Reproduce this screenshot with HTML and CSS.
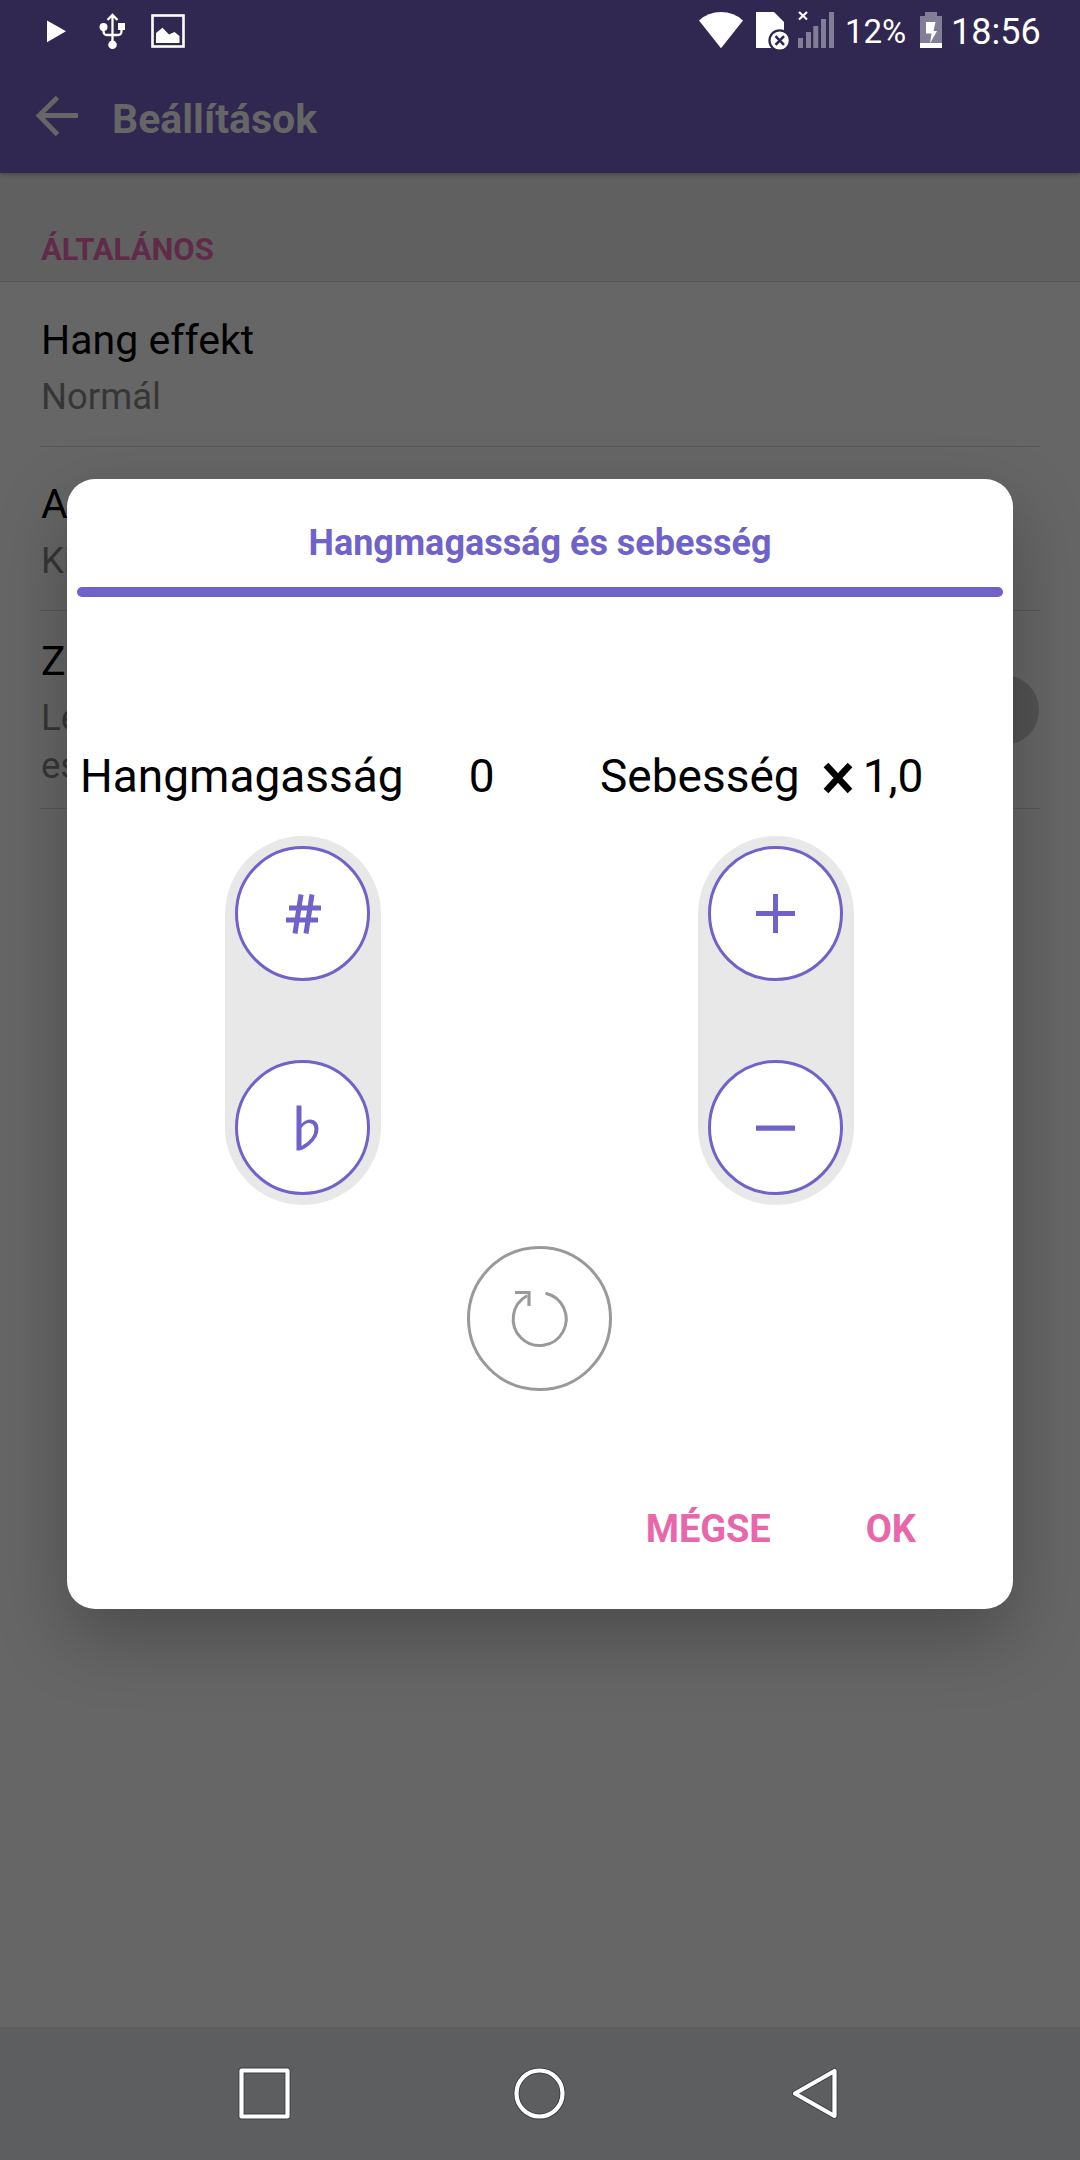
FILE: index.html
```html
<!DOCTYPE html>
<html lang="hu">
<head>
    <meta charset="UTF-8">
    <meta name="viewport" content="width=device-width, initial-scale=1.0">
    <title>Beállítások</title>
    <link rel="stylesheet" href="styles.css">
</head>
<body>
    <div class="screen">
        <header class="header">
            <div class="status-bar">
                <svg class="play-icon" width="20" height="64" viewBox="47 0 20 64"><path d="M47 20.500L66 31.200L47 42.200Z" fill="#fff"/></svg>
                <svg class="usb-icon" width="28" height="64" viewBox="98 0 28 64">
                    <path d="M112.500 15V42M107.500 20L112.500 15L117.500 20M103.500 28V31Q103.500 35 107 35H118Q121.500 35 121.500 31V28" fill="none" stroke="#fff" stroke-width="2.300"/>
                    <circle cx="103.500" cy="27" r="4" fill="#fff"/>
                    <circle cx="112.500" cy="44.700" r="4.300" fill="#fff"/>
                    <rect x="118" y="23" width="7" height="7" fill="#fff"/>
                </svg>
                <svg class="image-icon" width="34" height="64" viewBox="151 0 34 64">
                    <rect x="152.500" y="15.500" width="31" height="31" fill="none" stroke="#fff" stroke-width="2.600"/>
                    <path d="M156 33L162.500 27.700L169 34.500L174.500 32L179.500 36V43H156Z" fill="#fff"/>
                </svg>
                <svg class="wifi-icon" width="44" height="64" viewBox="699 0 44 64"><path d="M699 20.500Q708 12 721 12T743 20.500L721 48.300Z" fill="#fff"/></svg>
                <svg class="sim-icon" width="34" height="64" viewBox="756 0 34 64">
                    <path d="M756 12H774L784 22V48H756Z" fill="#fff"/>
                    <circle cx="779.700" cy="40.500" r="10.200" fill="#fff" stroke="#302851" stroke-width="2.300"/>
                    <path d="M775.500 36.200L784 44.800M784 36.200L775.500 44.800" stroke="#302851" stroke-width="2.600"/>
                </svg>
                <svg class="signal-icon" width="37" height="64" viewBox="798 0 37 64">
                    <path d="M798 38h5v10h-5zM806 32h5v16h-5zM813.300 26h5v22h-5zM821 19h5v29h-5zM829 12h5v36h-5z" fill="#837e97"/>
                    <path d="M799 12L807 19.500M807 12L799 19.500" stroke="#fff" stroke-width="2.200"/>
                </svg>
                <span class="percent">12%</span>
                <svg class="battery-icon" width="22" height="64" viewBox="920 0 22 64">
                    <path d="M925 12h12v4h5v27h-22V16h5z" fill="#837e97"/>
                    <path d="M920 43h22v5h-22zM926 22h9.500l-2 9h3.500l-7 12.500l1.500-10h-5.500z" fill="#fff"/>
                </svg>
                <span class="clock">18:56</span>
            </div>
            <div class="toolbar">
                <svg class="back-icon" width="44" height="44" viewBox="35 94 44 44"><path d="M78 115.500H39M57.500 97.500L39 115.500L57.500 134.500" fill="none" stroke="#666" stroke-width="4.800"/></svg>
                <h1>Beállítások</h1>
            </div>
        </header>

        <h2 class="section-title">ÁLTALÁNOS</h2>
        <ul class="settings">
            <li class="setting">
                <div class="name">Hang effekt</div>
                <div class="value">Normál</div>
            </li>
            <li class="setting">
                <div class="name">A</div>
                <div class="value">Ki</div>
            </li>
            <li class="setting setting-switch">
                <div>
                    <div class="name">Z</div>
                    <div class="value">Le<br>es</div>
                </div>
                <span class="knob"></span>
            </li>
        </ul>

        <nav class="nav-bar">
            <svg width="1080" height="133" viewBox="0 2027 1080 133">
                <g fill="none" stroke="#3c3d3f" stroke-width="6" stroke-linejoin="round">
                    <rect x="241.500" y="2070.500" width="46" height="46"/>
                    <circle cx="539.500" cy="2093.500" r="23"/>
                    <path d="M834.500 2071V2116L795 2093.500Z"/>
                </g>
                <g fill="none" stroke="#fff" stroke-width="4.200" stroke-linejoin="round">
                    <rect x="241.500" y="2070.500" width="46" height="46"/>
                    <circle cx="539.500" cy="2093.500" r="23"/>
                    <path d="M834.500 2071V2116L795 2093.500Z"/>
                </g>
            </svg>
        </nav>

        <div class="dialog">
            <h3>Hangmagasság és sebesség</h3>
            <div class="bar"></div>
            <div class="columns">
                <div class="column">
                    <div class="label-row">
                        <span class="label">Hangmagasság</span>
                        <span class="pitch">0</span>
                    </div>
                    <div class="pill">
                        <button class="round">
                            <svg width="60" height="60" viewBox="0 0 60 60"><path d="M28 10.500L22 49.500M39 10.500L33 49.500M16 24H48M13 36H45" fill="none" stroke="#6f63ca" stroke-width="5"/></svg>
                        </button>
                        <button class="round">
                            <svg width="60" height="60" viewBox="0 0 60 60"><path fill-rule="evenodd" d="M23.500 7.500h5V26Q32 21.500 37.500 21.500Q45.500 22 45.500 31Q45.500 39 37 46.500Q31.500 51.500 26.500 52.500H23.500ZM28.500 30V48Q41.500 41 41.500 31Q41 25 36 25Q32 25 28.500 30Z" fill="#6f63ca"/></svg>
                        </button>
                    </div>
                </div>
                <div class="column">
                    <div class="label-row">
                        <span class="label">Sebesség</span>
                        <svg class="times" width="30" height="32" viewBox="0 0 30 32"><path d="M3 3L27 29M27 3L3 29" stroke="#000" stroke-width="6.500"/></svg>
                        <span>1,0</span>
                    </div>
                    <div class="pill">
                        <button class="round">
                            <svg width="61" height="61" viewBox="0 0 61 61"><path d="M28 11h5v17h17v5H33v17h-5V33H11v-5h17z" fill="#6f63ca"/></svg>
                        </button>
                        <button class="round">
                            <svg width="61" height="61" viewBox="0 0 61 61"><path d="M11 28.500h39v5.200H11z" fill="#6f63ca"/></svg>
                        </button>
                    </div>
                </div>
            </div>
            <button class="round reset">
                <svg width="69" height="69" viewBox="0 0 69 69"><path d="M40.500 9.200A26.500 26.500 0 1 1 22 11.800" fill="none" stroke="#999" stroke-width="3"/><path d="M10 8.500H24V22" fill="none" stroke="#999" stroke-width="3.200"/></svg>
            </button>
            <div class="actions">
                <button class="cancel">MÉGSE</button>
                <button>OK</button>
            </div>
        </div>
    </div>
</body>
</html>
```

FILE: styles.css
```css
* {
    box-sizing: border-box;
}
body {
    margin: 0;
    font-family: Roboto, sans-serif;
    background: #666;
}
h1, h2, h3, ul {
    margin: 0;
    padding: 0;
}
svg {
    display: block;
    flex: none;
}
.screen {
    position: relative;
    display: flex;
    flex-direction: column;
    width: 1080px;
    height: 2160px;
    overflow: hidden;
}

/* status bar + toolbar */
.header {
    position: relative;
    height: 173px;
    background: #302851;
    box-shadow: 0 2px 4px rgba(0, 0, 0, 0.25);
}
.status-bar {
    display: flex;
    height: 64px;
    padding-left: 47px;
    color: #fff;
    line-height: 64px;
    white-space: nowrap;
}
.usb-icon {
    margin-left: 31px;
}
.image-icon {
    margin-left: 25px;
}
.wifi-icon {
    margin-left: 514px;
}
.sim-icon {
    margin-left: 13px;
}
.signal-icon {
    margin-left: 8px;
}
.percent {
    width: 75px;
    margin-left: 10px;
    font-size: 33px;
}
.clock {
    margin-left: 9px;
    font-size: 36px;
    line-height: 65px;
}
.toolbar {
    display: flex;
    padding: 30px 0 0 35px;
}
.toolbar h1 {
    margin-left: 33px;
    color: #666;
    font-size: 41px;
    line-height: 50px;
}

/* settings list */
.section-title {
    height: 109px;
    padding: 57px 0 0 41px;
    background: #606060;
    border-bottom: 1px solid #565656;
    color: #602b48;
    font-size: 31px;
    line-height: 40px;
}
.settings {
    flex: 1;
    list-style: none;
    padding: 0 40px;
}
.setting {
    height: 164px;
    padding-top: 33px;
    border-bottom: 1px solid #575757;
    line-height: 48px;
}
.setting:first-child {
    height: 165px;
    padding-top: 34px;
}
.setting-switch {
    display: flex;
    justify-content: space-between;
    height: 198px;
    padding-top: 26px;
}
.name {
    margin-left: 1px;
    font-size: 41px;
}
.value {
    margin: 9px 0 0 1px;
    color: #363636;
    font-size: 36.5px;
}
.knob {
    width: 70px;
    height: 70px;
    margin: 38px 1px 0 0;
    border-radius: 50%;
    background: #535353;
}
.nav-bar {
    height: 133px;
    background: #5d5e60;
}

/* dialog */
.dialog {
    position: absolute;
    left: 67px;
    top: 479px;
    width: 946px;
    height: 1130px;
    border-radius: 28px;
    background: #fff;
    box-shadow: 0 28px 70px rgba(0, 0, 0, 0.26);
}
.dialog h3 {
    height: 108px;
    padding-top: 40px;
    color: #6f63ca;
    font-size: 36px;
    line-height: 48px;
    text-align: center;
}
.bar {
    height: 10px;
    margin: 0 10px;
    border-radius: 5px;
    background: #6f63ca;
}
.columns {
    display: flex;
    padding-top: 149px;
}
.column {
    width: 473px;
}
.label-row {
    display: flex;
    align-items: center;
    height: 60px;
    padding-left: 13px;
    font-size: 46px;
    line-height: 60px;
    white-space: nowrap;
}
.pitch {
    margin-left: 65px;
}
.column + .column .label-row {
    padding-left: 60px;
}
.times {
    margin: 3px 10px 0 23px;
}
.pill {
    display: flex;
    flex-direction: column;
    justify-content: space-between;
    width: 156px;
    height: 369px;
    margin: 30px 0 0 158px;
    padding: 10px;
    border-radius: 78px;
    background: #e8e8e8;
}
button {
    padding: 0;
    border: none;
    background: none;
    font-family: inherit;
    cursor: pointer;
}
.round {
    display: flex;
    align-items: center;
    justify-content: center;
    width: 135px;
    height: 135px;
    border: 3px solid #6f63ca;
    border-radius: 50%;
    background: #fff;
}
.reset {
    width: 145px;
    height: 145px;
    margin: 41px 0 0 400px;
    border-color: #999;
}
.actions {
    display: flex;
    justify-content: flex-end;
    gap: 95px;
    margin-top: 111px;
    padding-right: 97px;
}
.actions button {
    color: #e866aa;
    font-size: 38px;
    font-weight: bold;
    line-height: 54px;
}
.actions .cancel {
    letter-spacing: -0.1px;
}
```
